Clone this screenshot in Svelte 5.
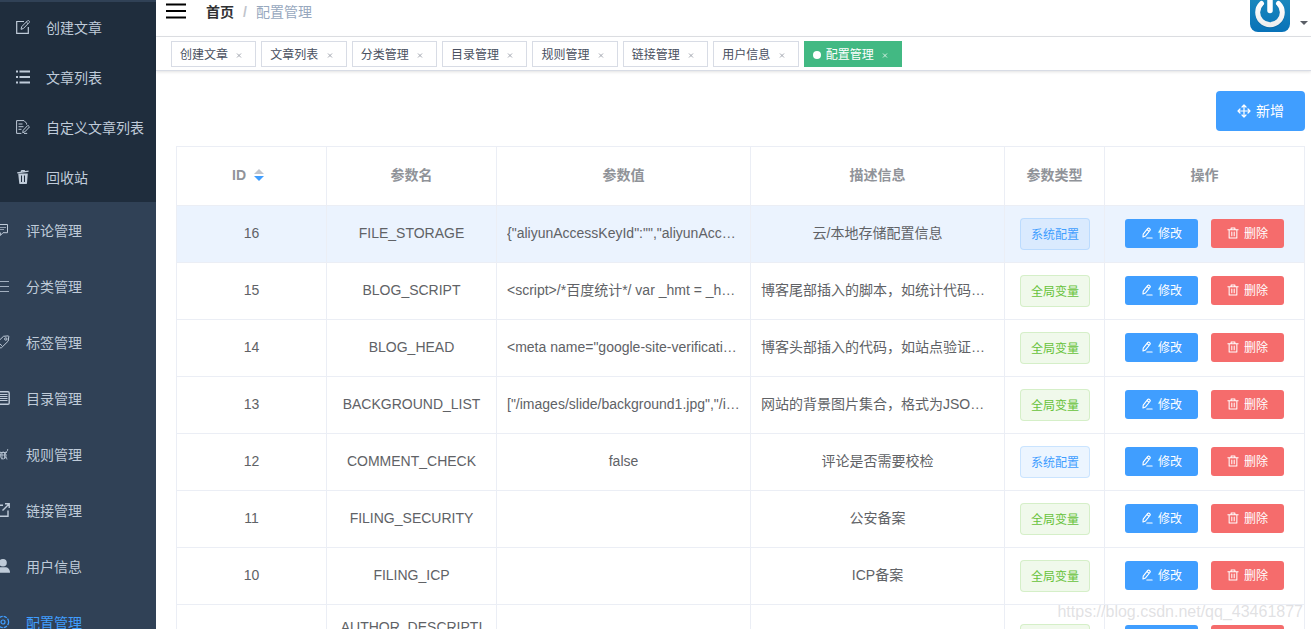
<script>
  const articleLinks = [
    { label: '创建文章', icon: 'compose' },
    { label: '文章列表', icon: 'list' },
    { label: '自定义文章列表', icon: 'draft' },
    { label: '回收站', icon: 'bin' },
  ];

  const links = [
    { label: '评论管理', icon: 'comment' },
    { label: '分类管理', icon: 'lines' },
    { label: '标签管理', icon: 'tag' },
    { label: '目录管理', icon: 'form' },
    { label: '规则管理', icon: 'bug' },
    { label: '链接管理', icon: 'external' },
    { label: '用户信息', icon: 'user' },
    { label: '配置管理', icon: 'gear', active: true },
  ];

  let tabs = $state([
    '创建文章', '文章列表', '分类管理', '目录管理',
    '规则管理', '链接管理', '用户信息', '配置管理',
  ]);
  const current = '配置管理';

  function closeTab(name) {
    tabs = tabs.filter((t) => t !== name);
  }

  const rows = [
    { id: 16, name: 'FILE_STORAGE', value: '{"aliyunAccessKeyId":"","aliyunAccessKey', desc: '云/本地存储配置信息', system: true },
    { id: 15, name: 'BLOG_SCRIPT', value: '\x3Cscript>/*百度统计*/ var _hmt = _hmt ||', desc: '博客尾部插入的脚本，如统计代码脚本', system: false },
    { id: 14, name: 'BLOG_HEAD', value: '\x3Cmeta name="google-site-verification"', desc: '博客头部插入的代码，如站点验证代码', system: false },
    { id: 13, name: 'BACKGROUND_LIST', value: '["/images/slide/background1.jpg","/image', desc: '网站的背景图片集合，格式为JSON数组', system: false },
    { id: 12, name: 'COMMENT_CHECK', value: 'false', desc: '评论是否需要校检', system: true },
    { id: 11, name: 'FILING_SECURITY', value: '', desc: '公安备案', system: false },
    { id: 10, name: 'FILING_ICP', value: '', desc: 'ICP备案', system: false },
    { id: 9, name: 'AUTHOR_DESCRIPTION', value: '', desc: '', system: false },
  ];
  let selected = $state(16);
</script>

{#snippet icon(name)}
  <svg class="icon" viewBox="0 0 14 14" fill="none" stroke="currentColor" aria-hidden="true">
    {#if name === 'compose'}
      <path d="M8 1.500H.7v11.800h11.600V7" stroke-width="1.200" />
      <path d="M5 9.300l.7-2.600L11.400.9c.5-.5 1.200-.5 1.700 0s.5 1.200 0 1.700L7.400 8.500zM10.300 2l1.700 1.700" />
    {:else if name === 'list'}
      <path d="M0 1.500h2M0 7h2M0 12.500h2M3.500 1.500H14M3.500 7H14M3.500 12.500H14" stroke-width="2" />
    {:else if name === 'draft'}
      <path d="M10.500 4.500V3.200L8 .6H.6v12.800h4.800M2.500 4h4M2.500 6.700h5M2.500 9.300h3" />
      <path d="M6.700 12.700l.5-2.400 4.700-5 1.600 1.600-4.700 5zM8 13.400h3.200" />
    {:else if name === 'bin'}
      <path d="M2.200 3.500h9.600L11 13c0 .6-.4 1-1 1H4.200c-.6 0-1-.4-1-1z" fill="currentColor" stroke="none" />
      <path d="M1.200 2.800l11.400-1.600M5.200 1.700l.3-1 2.700-.3.500.8" stroke-width="1.200" />
      <path d="M5.500 5.500v6.500M8.500 5.500v6.500" stroke="#1f2d3d" />
    {:else if name === 'comment'}
      <path d="M-1 1.500h12.500v8.200H7L4.300 12.500V9.700H-1z" /><path d="M3 4.500h7M3 6.500h5" opacity=".7" />
    {:else if name === 'lines'}
      <path d="M1 2.500h12M1 7.500h12M1 12.500h12" stroke-width="1.200" opacity=".8" />
    {:else if name === 'tag'}
      <path d="M1 7.500L7.500 1.300l4.500-.4c.6 0 .8.200.8.700l-.6 4.500L5.500 12.700c-.4.4-.9.4-1.300 0L1 9c-.4-.5-.4-1 0-1.500z" />
      <circle cx="9.800" cy="4" r="1.200" /><path d="M3.500 8.500l2.500 2.300" />
    {:else if name === 'form'}
      <rect x="1" y=".8" width="12.200" height="12.400" rx="1.200" stroke-width="1.400" />
      <path d="M3.500 3.500h8M3.500 5.500h8M3.500 7.500h8M3.500 9.500h8" />
    {:else if name === 'bug'}
      <path d="M3 5.500h8M4 8h6.500M3.500 10.500L2 12.500M10 9.500l1 3M6 6v6.500M8.500 6v5.500M9.500 5c1.500-.2 2.300-1 2.200-3M4.500 5C3 4.500 2 3.500 2.200 2" opacity=".8" />
      <ellipse cx="7.200" cy="8.500" rx="2.800" ry="3.500" opacity=".8" />
    {:else if name === 'external'}
      <path d="M7 2.200H1v11h11V7.500M9 .8h4.200V5M13 1L6.500 7.600" stroke-width="1.400" />
    {:else if name === 'user'}
      <g fill="currentColor" stroke="none"><circle cx="7" cy="3.800" r="3.800" /><path d="M0 13.700c0-3.500 2-5.500 5-5.500h4c3 0 5 2 5 5.500z" /></g>
    {:else if name === 'gear'}
      <circle cx="7" cy="7" r="5.600" stroke-dasharray="3.400 1" stroke-width="1.300" /><circle cx="7" cy="7" r="2" stroke-width="1.200" />
    {:else if name === 'move'}
      <path d="M7 1.200v11.600M1.200 7h11.600M5 3l2-2 2 2M5 11l2 2 2-2M3 5L1 7l2 2M11 5l2 2-2 2" stroke-width="1.200" stroke-linecap="round" stroke-linejoin="round" />
    {:else if name === 'edit'}
      <path d="M2.600 8.300L7.900 1.700c.4-.5 1-.6 1.500-.2l1 .8c.5.4.6 1 .2 1.500L5.300 10.400l-3 1.300zM7 3l2.500 2M6.800 12.800H13" stroke-width="1.300" stroke-linecap="round" stroke-linejoin="round" />
    {:else if name === 'delete'}
      <path d="M1 3.200h12M4.800 3V1.200h4.400V3M2.500 3.200v9.600h9V3.200M5.600 5.800v4.400M8.400 5.800v4.400" stroke-width="1.200" stroke-linecap="round" stroke-linejoin="round" />
    {/if}
  </svg>
{/snippet}

<div class="layout">
  <nav class="sidebar">
    <ul class="submenu">
      {#each articleLinks as link}
        <li><a href="#top">{@render icon(link.icon)}<span class="label">{link.label}</span></a></li>
      {/each}
    </ul>
    <ul class="menu">
      {#each links as link}
        <li><a href="#top" class:active={link.active}>{@render icon(link.icon)}<span class="label">{link.label}</span></a></li>
      {/each}
    </ul>
  </nav>

  <div class="main">
    <header class="navbar">
      <button class="toggle" aria-label="菜单">
        <svg viewBox="0 0 20 16" aria-hidden="true"><path d="M0 1.500h20M0 8h20M0 14.500h20" stroke="#000" stroke-width="2" /></svg>
      </button>
      <div class="crumbs"><a href="#top">首页</a><span class="slash">/</span><span class="here">配置管理</span></div>
      <button class="account" aria-label="账户">
        <svg class="avatar" viewBox="0 8 40 32" aria-hidden="true">
          <defs>
            <linearGradient id="blue" x1="0" y1="0" x2="0" y2="1"><stop offset="0" stop-color="#1e8cbe" /><stop offset="1" stop-color="#0872b8" /></linearGradient>
            <linearGradient id="white" x1="0" y1="0" x2="0" y2="1"><stop offset="0" stop-color="#fff" /><stop offset="1" stop-color="#eee" /></linearGradient>
          </defs>
          <rect width="40" height="40" rx="8" fill="url(#blue)" />
          <path d="M11.500 11.500a12.300 12.300 0 1 0 17 0" fill="none" stroke="#075e97" stroke-width="5" stroke-linecap="round" transform="translate(0 1)" opacity=".5" />
          <path d="M11.500 11.500a12.300 12.300 0 1 0 17 0" fill="none" stroke="url(#white)" stroke-width="5" stroke-linecap="round" />
          <path d="M20 6v12.500" fill="none" stroke="#fff" stroke-width="5.500" stroke-linecap="round" />
        </svg>
        <svg class="caret" viewBox="0 0 8 4" aria-hidden="true"><path d="M0 0h8L4 4z" fill="#5a5e66" /></svg>
      </button>
    </header>

    <div class="tabs">
      {#each tabs as tab}
        <span class="tab" class:current={tab === current}>
          {#if tab === current}<i class="dot"></i>{/if}
          <a href="#top">{tab}</a>
          <button aria-label="关闭" onclick={() => closeTab(tab)}>
            <svg viewBox="0 0 16 16" aria-hidden="true"><path d="M6 5.500l4 4M10 5.500l-4 4" stroke="currentColor" /></svg>
          </button>
        </span>
      {/each}
    </div>

    <main>
      <div class="toolbar"><button class="btn large primary">{@render icon('move')}新增</button></div>
      <table>
        <colgroup>
          <col class="c-id" /><col class="c-name" /><col /><col /><col class="c-type" /><col class="c-ops" />
        </colgroup>
        <thead>
          <tr>
            <th>
              <span class="sortable">ID
                <svg viewBox="0 0 10 12" aria-hidden="true"><path d="M0 5l5-5 5 5z" fill="#c0c4cc" /><path d="M0 7h10l-5 5z" fill="#409eff" /></svg>
              </span>
            </th>
            <th>参数名</th><th>参数值</th><th>描述信息</th><th>参数类型</th><th>操作</th>
          </tr>
        </thead>
        <tbody>
          {#each rows as row}
            <tr class:selected={row.id === selected} onclick={() => (selected = row.id)}>
              <td>{row.id}</td>
              <td>{row.name}</td>
              <td><div class="clip">{row.value}</div></td>
              <td><div class="clip">{row.desc}</div></td>
              <td class="type"><span class="badge" class:system={row.system}>{row.system ? '系统配置' : '全局变量'}</span></td>
              <td>
                <div class="ops">
                  <button class="btn primary">{@render icon('edit')}<span class="label">修改</span></button>
                  <button class="btn danger">{@render icon('delete')}<span class="label">删除</span></button>
                </div>
              </td>
            </tr>
          {/each}
        </tbody>
      </table>
    </main>
  </div>
  <div class="watermark">https://blog.csdn.net/qq_43461877</div>
</div>

<style>
  :global(body) {
    overflow: hidden;
  }

  .layout {
    display: flex;
    position: relative;
    height: 100vh;
    overflow: hidden;
    background: #fff;
    color: #606266;
    font: 14px/23px "Liberation Sans", "Noto Sans CJK SC", sans-serif;
  }

  .layout * {
    box-sizing: border-box;
  }

  a {
    color: inherit;
    text-decoration: none;
  }

  button {
    padding: 0;
    border: 0;
    background: none;
    color: inherit;
    font: inherit;
    cursor: pointer;
  }

  svg {
    display: block;
    flex: none;
  }

  .icon {
    width: 14px;
    height: 14px;
  }

  .label {
    padding-top: 2px;
  }

  /* Sidebar */
  .sidebar {
    flex: none;
    width: 156px;
    padding-top: 2px;
    overflow: hidden;
    background: #304156;
    color: #bfcbd9;
  }

  .sidebar ul {
    margin: 0;
    padding: 0;
    list-style: none;
  }

  .sidebar .submenu {
    background: #1f2d3d;
  }

  .sidebar a {
    display: flex;
    align-items: center;
    gap: 16px;
    height: 56px;
    margin-left: -4px;
    white-space: nowrap;
  }

  .sidebar .submenu a {
    height: 50px;
    padding-left: 20px;
  }

  .sidebar .active {
    color: #409eff;
  }

  /* Top bar */
  .main {
    flex: 1;
    min-width: 0;
  }

  .navbar {
    display: flex;
    height: 37px;
    padding: 0 3px 0 10px;
    border-bottom: 1px solid #e0e2e6;
  }

  .toggle {
    align-self: flex-start;
    padding-top: 3px;
  }

  .toggle svg {
    width: 20px;
    height: 16px;
  }

  .crumbs {
    display: flex;
    margin-left: 20px;
    padding-top: 1px;
    color: #97a8be;
  }

  .crumbs a {
    color: #303133;
    font-weight: 700;
  }

  .slash {
    margin: 0 9px;
    color: #c0c4cc;
    font-weight: 700;
  }

  .account {
    display: flex;
    align-items: flex-end;
    align-self: flex-start;
    gap: 10px;
    margin-left: auto;
  }

  .avatar {
    width: 40px;
    height: 32px;
  }

  .caret {
    width: 8px;
    height: 4px;
    margin-bottom: 7px;
  }

  /* Open pages */
  .tabs {
    display: flex;
    align-items: flex-start;
    height: 34px;
    padding: 4px 10px 0;
    border-bottom: 1px solid #d8dce5;
    box-shadow: 0 1px 3px rgba(0, 0, 0, 0.12);
  }

  .tab {
    height: 26px;
    margin-left: 5px;
    padding: 0 8px;
    border: 1px solid #d8dce5;
    color: #495060;
    font-size: 12px;
    line-height: 26px;
    white-space: nowrap;
  }

  .tab.current {
    border-color: #42b983;
    background: #42b983;
    color: #fff;
  }

  .tab button {
    color: #a3a7b0;
    vertical-align: middle;
  }

  .tab.current button {
    color: #d5f0e3;
  }

  .tab button svg {
    width: 16px;
    height: 16px;
  }

  .dot {
    display: inline-block;
    width: 8px;
    height: 8px;
    margin-right: 2px;
    border-radius: 50%;
    background: #fff;
  }

  /* Content */
  main {
    padding: 20px 6px 0 20px;
  }

  .toolbar {
    display: flex;
    justify-content: flex-end;
    margin-bottom: 15px;
  }

  .btn {
    display: inline-flex;
    align-items: center;
    gap: 5px;
    height: 29px;
    padding: 0 16px;
    border-radius: 3px;
    color: #fff;
    font-size: 12px;
    line-height: 12px;
  }

  .btn .icon {
    width: 12px;
    height: 12px;
  }

  .btn.large {
    height: 40px;
    padding: 0 21px;
    border-radius: 4px;
    font-size: 14px;
  }

  .btn.large .icon {
    width: 14px;
    height: 14px;
  }

  .primary {
    background: #409eff;
  }

  .danger {
    background: #f56c6c;
  }

  table {
    width: 100%;
    border: solid #ebeef5;
    border-width: 1px 0 0 1px;
    border-spacing: 0;
    table-layout: fixed;
    text-align: center;
  }

  .c-id {
    width: 150px;
  }

  .c-name {
    width: 170px;
  }

  .c-type {
    width: 100px;
  }

  .c-ops {
    width: 200px;
  }

  th,
  td {
    padding: 11px 10px 13px;
    border: solid #ebeef5;
    border-width: 0 1px 1px 0;
    word-break: break-all;
  }

  th {
    height: 59px;
    padding: 0 10px 2px;
    color: #909399;
    font-weight: 700;
  }

  .sortable {
    display: inline-flex;
    align-items: center;
    gap: 8px;
  }

  .sortable svg {
    width: 10px;
    height: 12px;
    margin-right: 7px;
  }

  .selected td {
    background: #ebf3fe;
  }

  .clip {
    overflow: hidden;
    text-overflow: ellipsis;
    white-space: nowrap;
  }

  td.type {
    padding: 12px 0 12px 1px;
  }

  .badge {
    display: inline-block;
    height: 32px;
    padding: 0 10px;
    border: 1px solid rgba(103, 194, 58, 0.2);
    border-radius: 4px;
    background: rgba(103, 194, 58, 0.1);
    color: #67c23a;
    font-size: 12px;
    line-height: 32px;
    vertical-align: top;
    white-space: nowrap;
  }

  .badge.system {
    border-color: rgba(64, 158, 255, 0.2);
    background: rgba(64, 158, 255, 0.1);
    color: #409eff;
  }

  .ops {
    display: flex;
    justify-content: center;
    gap: 13px;
  }

  .watermark {
    position: absolute;
    right: 8px;
    bottom: 6px;
    color: rgba(200, 200, 204, 0.55);
    font-size: 16px;
    text-shadow: 1px 1px 1px #fff;
    pointer-events: none;
  }
</style>
